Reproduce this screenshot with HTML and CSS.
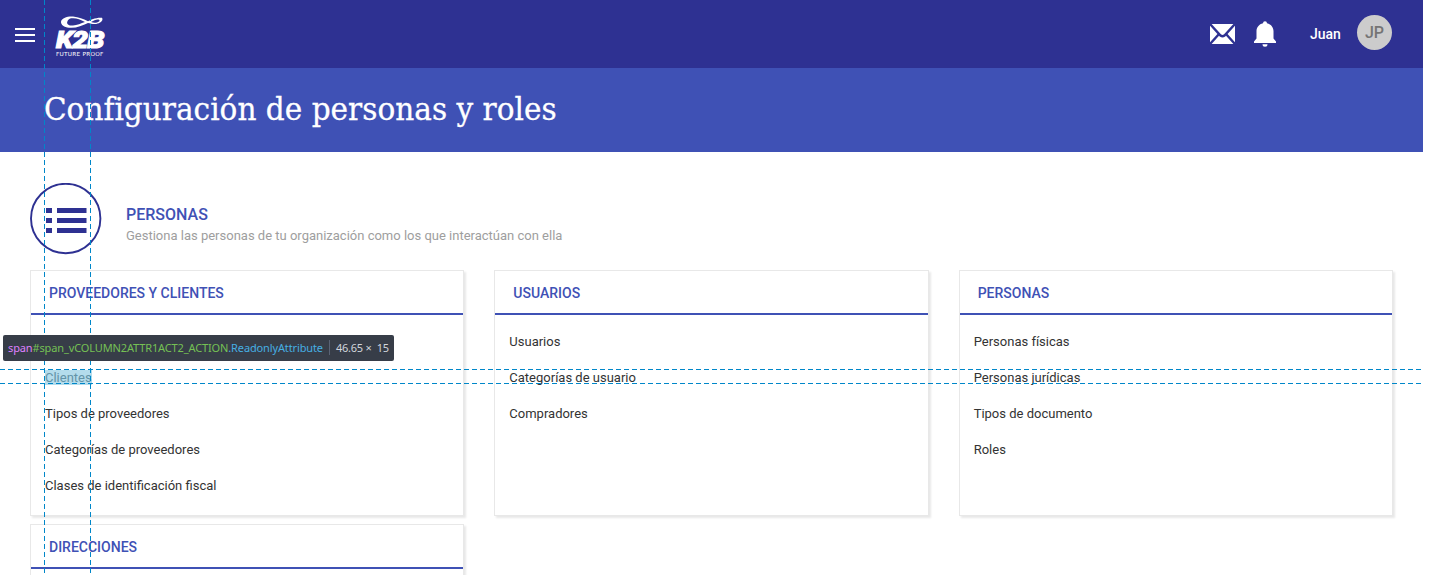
FILE: index.html
```html
<!DOCTYPE html>
<html lang="es">
<head>
<meta charset="utf-8">
<title>Configuración de personas y roles</title>
<link rel="stylesheet" href="styles.css">
</head>
<body>
<div class="page">
  <header class="topbar">
    <div class="menu"><i></i><i></i><i></i></div>
    <div class="logo">
      <svg class="logo-mark" width="42" height="13" viewBox="0 0 42 13"><path fill="#fff" fill-rule="evenodd" d="M0 6C0 2 7 0 12 0.500C18 1 22 3 27 5.200C30 4 34 1.500 41 1.800C43 5 38 8 34 8C31 8 29 7.500 27 7C21 9.500 15 12.500 8 11.700C3 11 0 9 0 6ZM6.500 5.300C5 8 8 10 12 9.500C16 9 20 7.500 24 6C19 3.500 15 1.600 10 2.300C8 2.700 7 4 6.500 5.300ZM30 6.100C33 7.300 36 7 38 5.500C40 3.300 36 3.200 33.500 4.300Z"/></svg>
      <span class="logo-name">K2B</span>
      <span class="logo-tag">FUTURE PROOF</span>
    </div>
    <div class="tools">
      <svg class="mail" width="25" height="20" viewBox="0 0 25 20"><path fill="#fff" d="M0 0h25v20H0z"/><path d="M0 0L10.500 11.500Q12.500 13 14.500 11.500L25 0M0 20L9 10M25 20L16 10" fill="none" stroke="#2e3192" stroke-width="2.400"/></svg>
      <svg class="bell" width="22" height="26" viewBox="0 0 22 26"><path fill="#fff" d="M9 2.200a2 2 0 0 1 4 0C17 3 19.500 6.500 19.500 10v7.500L22 20.500V22H0v-1.500L2.500 17.500V10C2.500 6.500 5 3 9 2.200ZM8.500 23.200h5a2.500 2.500 0 0 1-5 0Z"/></svg>
      <span class="user">Juan</span>
      <span class="avatar">JP</span>
    </div>
  </header>
  <div class="banner"><h1>Configuración de personas y roles</h1></div>
  <main>
    <section class="intro">
      <svg width="72" height="72" viewBox="0 0 72 72"><circle cx="35.700" cy="35.500" r="34.700" fill="none" stroke="#2e3192" stroke-width="1.900"/><path fill="#2e3192" d="M16 25h6v5h-6zM27 25h29.500v5H27zM16 35h6v5h-6zM27 35h29.500v5H27zM16 45h6v5h-6zM27 45h29.500v5H27z"/></svg>
      <div class="intro-text"><h2>PERSONAS</h2><p>Gestiona las personas de tu organización como los que interactúan con ella</p></div>
    </section>
    <section class="cards">
      <article class="card"><h3>PROVEEDORES Y CLIENTES</h3><ul><li></li><li><span class="selected">Clientes</span></li><li>Tipos de proveedores</li><li>Categorías de proveedores</li><li>Clases de identificación fiscal</li></ul></article>
      <article class="card"><h3>USUARIOS</h3><ul><li>Usuarios</li><li>Categorías de usuario</li><li>Compradores</li></ul></article>
      <article class="card"><h3>PERSONAS</h3><ul><li>Personas físicas</li><li>Personas jurídicas</li><li>Tipos de documento</li><li>Roles</li></ul></article>
      <article class="card"><h3>DIRECCIONES</h3></article>
    </section>
  </main>
</div>
<div class="guide-v guide-left"></div>
<div class="guide-v guide-right"></div>
<div class="guide-h guide-top"></div>
<div class="guide-h guide-bottom"></div>
<div class="tip"><span class="tip-name"><b>span</b><em>#span_vCOLUMN2ATTR1ACT2_ACTION</em><i>.ReadonlyAttribute</i></span><span class="tip-size">46.65 × &nbsp;15</span></div>
</body>
</html>
```
FILE: styles.css
```css
* { box-sizing: border-box; }
body { margin: 0; height: 575px; overflow: hidden; position: relative; background: #fff; font-family: Roboto, sans-serif; color: #333; }
h1, h2, h3, p, ul { margin: 0; padding: 0; }
.page { width: 1423px; height: 575px; overflow: hidden; }
.topbar { height: 68px; background: #2e3192; display: flex; align-items: flex-start; padding: 0 31px 0 15px; }
.menu { display: flex; flex-direction: column; gap: 4px; width: 20px; margin-top: 28px; }
.menu i { height: 2px; background: #fff; }
.logo { width: 52px; margin: 16px 0 0 21px; display: flex; flex-direction: column; align-items: flex-start; color: #fff; }
.logo-mark { margin-left: 5px; }
.logo-name { font: italic 900 23.500px/20px Roboto, sans-serif; margin-top: 1px; letter-spacing: -0.500px; -webkit-text-stroke: 1px #fff; white-space: nowrap; transform: scaleX(1.170); transform-origin: 0 0; }
.logo-tag { font: 5.500px/6px "DejaVu Sans", sans-serif; margin-top: 1px; letter-spacing: 0.200px; white-space: nowrap; transform: scaleX(1.060); transform-origin: 0 0; }
.tools { margin-left: auto; display: flex; align-items: flex-start; color: #fff; }
.mail { margin-top: 24px; }
.bell { margin: 21px 0 0 19px; }
.user { font-size: 14px; font-weight: 500; line-height: 20px; margin: 24px 0 0 34px; width: 47px; }
.avatar { width: 35px; height: 35px; margin-top: 15px; border-radius: 50%; background: #ccc; color: #757575; font-size: 16px; font-weight: 500; line-height: 36px; text-align: center; }
.banner { height: 84px; background: #3f51b5; padding: 18px 0 0 44px; }
h1 { display: inline-block; font: 400 32px/46px "DejaVu Serif", serif; color: #fff; -webkit-text-stroke: 0.300px #fff; white-space: nowrap; transform: scaleX(0.924); transform-origin: 0 0; }
main { padding: 31px 30px 0; }
.intro { display: flex; gap: 24px; height: 87px; }
.intro-text { padding-top: 21px; }
h2 { font-size: 16px; font-weight: 500; line-height: 21px; color: #3f51b5; }
.intro p { font-size: 13px; line-height: 21px; color: #9e9e9e; }
.cards { display: grid; grid-template-columns: repeat(3, 434.330px); column-gap: 30px; row-gap: 8px; grid-template-rows: 246px 246px; }
.card { border: 1px solid #e8e8e8; box-shadow: 2px 2px 2px #e8e8e8; background: #fff; }
h3 { height: 44px; border-bottom: 2px solid #3f51b5; padding-left: 18px; font-size: 14px; font-weight: 500; line-height: 44px; color: #3f51b5; }
.card ul { list-style: none; padding: 9px 14px; }
.card li { font-size: 13px; height: 36px; line-height: 36px; }
.selected { display: inline-block; line-height: 15px; background: #b4dcec; color: #6393a7; }
.guide-v { position: absolute; top: 0; width: 1px; height: 575px; background: repeating-linear-gradient(180deg, #0087c9 0 5px, transparent 5px 8px); }
.guide-left { left: 44px; }
.guide-right { left: 90px; }
.guide-h { position: absolute; left: 0; width: 1422px; height: 1px; background: repeating-linear-gradient(90deg, #0087c9 0 5px, transparent 5px 8px); }
.guide-top { top: 369px; }
.guide-bottom { top: 383px; }
.tip { position: absolute; left: 3px; top: 335px; width: 391px; height: 26px; border-radius: 2px; background: #373d48; display: flex; align-items: center; padding-left: 5px; font: 11px/26px "Noto Sans", sans-serif; white-space: nowrap; }
.tip-name { width: 321px; letter-spacing: -0.130px; }
.tip b, .tip em, .tip i { font-weight: 400; font-style: normal; }
.tip b { color: #df80ff; }
.tip em { color: #75c054; }
.tip i { color: #46afe3; }
.tip-size { color: #d0d5dc; line-height: 15px; border-left: 1px solid #5a6375; padding-left: 6px; letter-spacing: -0.250px; position: relative; top: -1px; }
```
